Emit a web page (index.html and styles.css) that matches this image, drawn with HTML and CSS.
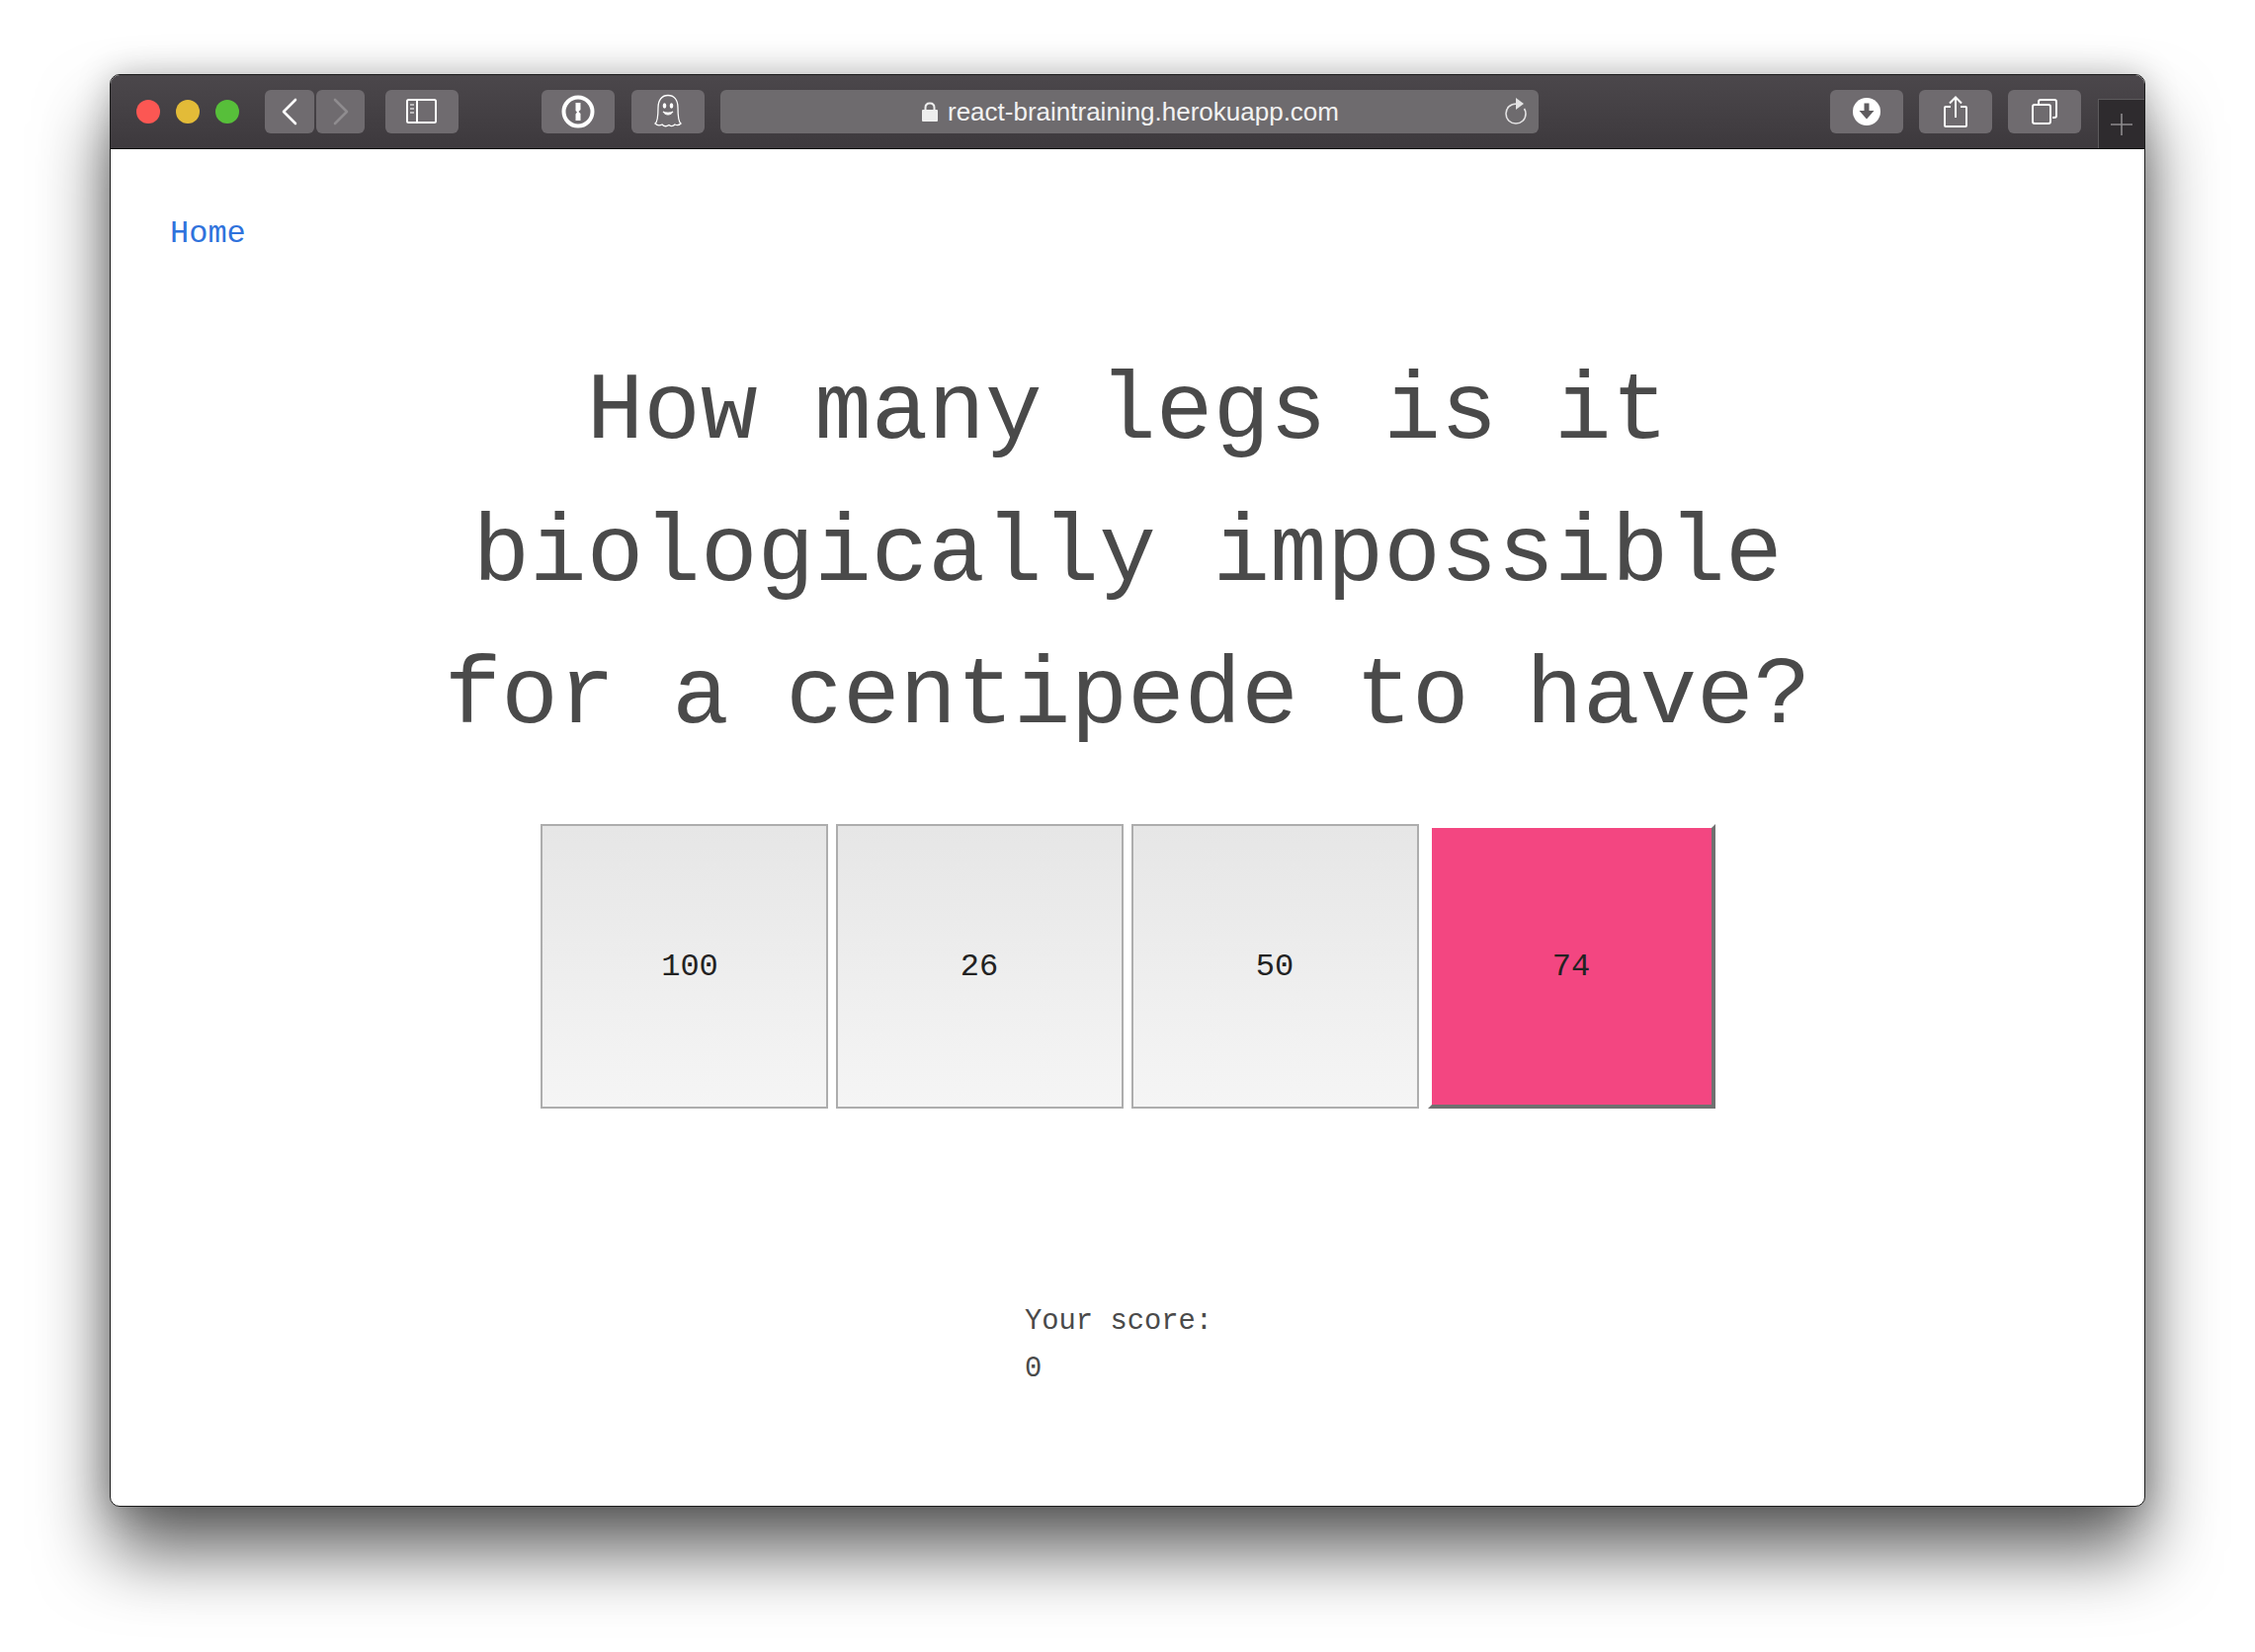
FILE: index.html
```html
<!DOCTYPE html>
<html lang="en">
<head>
    <meta charset="UTF-8">
    <title>Brain Training</title>
    <link rel="stylesheet" href="styles.css">
</head>
<body>

<div class="window">
    <div class="toolbar">
        <div class="lights">
            <span class="light red"></span>
            <span class="light yellow"></span>
            <span class="light green"></span>
        </div>

        <div class="tool back">
            <svg width="22" height="30" viewBox="0 0 22 30"><path d="M17 3 L5 15 L17 27" fill="none" stroke="#fff" stroke-width="2.6" stroke-linecap="round" stroke-linejoin="round"/></svg>
        </div>
        <div class="tool forward">
            <svg width="22" height="30" viewBox="0 0 22 30"><path d="M5 3 L17 15 L5 27" fill="none" stroke="#8f8c8f" stroke-width="2.6" stroke-linecap="round" stroke-linejoin="round"/></svg>
        </div>
        <div class="tool sidebar">
            <svg width="32" height="26" viewBox="0 0 32 26">
                <rect x="1" y="1" width="29" height="23" rx="1.5" fill="none" stroke="#fff" stroke-width="2"/>
                <path d="M11 1 V24" stroke="#fff" stroke-width="2"/>
                <path d="M4 6 H8 M4 10 H8 M4 14 H8" stroke="#bdbbbd" stroke-width="2"/>
            </svg>
        </div>

        <div class="tool onepassword">
            <svg width="34" height="34" viewBox="0 0 34 34">
                <circle cx="17" cy="17" r="14.5" fill="none" stroke="#fff" stroke-width="4"/>
                <path d="M14.5 8 H19.5 V15 L17.5 17 L19.5 19 V26 H14.5 V19.5 L16 17.5 L14.5 16 Z" fill="#fff"/>
            </svg>
        </div>
        <div class="tool ghost">
            <svg width="32" height="36" viewBox="0 0 32 36">
                <path d="M3 30 C6 28 6 20 6 14 C6 6 10 1.500 16 1.500 C22 1.500 26 6 26 14 C26 20 26 28 29 30 C27 32 25 32 23 31 C21 33 19 33 17 31.500 C15 33 12 33 10 31 C8 32 5 32 3 30 Z" fill="none" stroke="#fff" stroke-width="1.300"/>
                <ellipse cx="12.500" cy="12" rx="1.800" ry="2.800" fill="#fff"/>
                <ellipse cx="19.500" cy="12" rx="1.800" ry="2.800" fill="#fff"/>
                <path d="M11 18 C13 22 19 22 21 18 C18 19.500 14 19.500 11 18 Z" fill="#fff" stroke="#fff"/>
            </svg>
        </div>

        <div class="address">
            <svg class="lock" width="16" height="20" viewBox="0 0 16 20">
                <path d="M3.500 9 V6 C3.500 3 5.500 1.500 8 1.500 C10.500 1.500 12.500 3 12.500 6 V9" fill="none" stroke="#eee" stroke-width="2"/>
                <rect x="0" y="8" width="16" height="12" rx="1" fill="#eee"/>
            </svg>
            <span class="url">react-braintraining.herokuapp.com</span>
            <svg class="reload" width="24" height="28" viewBox="0 0 24 28">
                <path d="M13 6 C6 6 2 10.500 2 16 C2 22 6.500 26 12 26 C17.500 26 22 22 22 16 C22 14 21.500 12.500 20.500 11" fill="none" stroke="#e4e3e4" stroke-width="1.600"/>
                <path d="M12 0 L20 6 L12 12 Z" fill="#e4e3e4"/>
            </svg>
        </div>

        <div class="tool download">
            <svg width="28" height="28" viewBox="0 0 28 28">
                <circle cx="14" cy="14" r="14" fill="#fff"/>
                <path d="M11.500 5.500 H16.500 V13 H21.500 L14 21.500 L6.500 13 H11.500 Z" fill="#5f5c5f"/>
            </svg>
        </div>
        <div class="tool share">
            <svg width="24" height="32" viewBox="0 0 24 32">
                <path d="M7 11 H2 C1.400 11 1 11.400 1 12 V30 C1 30.600 1.400 31 2 31 H22 C22.600 31 23 30.600 23 30 V12 C23 11.400 22.600 11 22 11 H17" fill="none" stroke="#fff" stroke-width="2"/>
                <path d="M12 22 V2 M6 7.500 L12 1.500 L18 7.500" fill="none" stroke="#fff" stroke-width="2"/>
            </svg>
        </div>
        <div class="tool tabs">
            <svg width="26" height="26" viewBox="0 0 26 26">
                <rect x="1" y="6" width="18" height="19" rx="2" fill="none" stroke="#fff" stroke-width="2"/>
                <path d="M7 5 V3 C7 1.800 7.800 1 9 1 H23 C24.200 1 25 1.800 25 3 V17 C25 18.200 24.200 19 23 19 H21" fill="none" stroke="#fff" stroke-width="2"/>
            </svg>
        </div>

        <div class="new-tab">
            <svg width="22" height="22" viewBox="0 0 22 22"><path d="M11 0 V22 M0 11 H22" stroke="#8d8b8d" stroke-width="1.600"/></svg>
        </div>
    </div>

    <div class="page">
        <nav class="nav">
            <a class="home-link" href="#">Home</a>
        </nav>

        <h1 class="question">How many legs is it biologically impossible for a centipede to have?</h1>

        <div class="answers">
            <button class="answer answer-wide">100</button>
            <button class="answer">26</button>
            <button class="answer">50</button>
            <button class="answer answer-picked">74</button>
        </div>

        <div class="score">
            <div>Your score:</div>
            <div>0</div>
        </div>
    </div>
</div>

</body>
</html>
```

FILE: styles.css
```css
body {
    margin: 0;
    padding: 0;
    background-color: #ffffff;
    font-family: "Liberation Mono", monospace;
    height: 1672px;
    overflow: hidden;
}

.window {
    width: 2060px;
    height: 1450px;
    margin: 75px 0 0 111px;
    background-color: #ffffff;
    border-radius: 10px;
    overflow: hidden;
    display: flex;
    flex-direction: column;
    box-sizing: border-box;
    border: 1px solid #1c1c1c;
    box-shadow: 0 46px 72px rgba(0, 0, 0, 0.62), 0 0 34px rgba(0, 0, 0, 0.22);
}

.toolbar {
    height: 75px;
    flex-shrink: 0;
    box-sizing: border-box;
    padding-left: 26px;
    display: flex;
    align-items: center;
    background: linear-gradient(#4b474b, #3d393d);
    border-bottom: 1px solid #0c0c0c;
}

.lights {
    display: flex;
    gap: 16px;
    margin-right: 26px;
}

.light {
    width: 24px;
    height: 24px;
    border-radius: 50%;
}

.red {
    background-color: #fc5753;
}

.yellow {
    background-color: #e3bb38;
}

.green {
    background-color: #57bf3a;
}

.tool {
    width: 74px;
    height: 44px;
    flex-shrink: 0;
    border-radius: 6px;
    background-color: #6f6b6f;
    display: flex;
    align-items: center;
    justify-content: center;
}

.back {
    width: 50px;
    margin-right: 2px;
}

.forward {
    width: 49px;
    margin-right: 21px;
}

.sidebar {
    margin-right: 84px;
}

.onepassword {
    margin-right: 17px;
}

.ghost {
    margin-right: 16px;
}

.address {
    width: 828px;
    height: 44px;
    flex-shrink: 0;
    border-radius: 6px;
    background-color: #6e6b6e;
    margin-right: 295px;
    display: flex;
    align-items: center;
    color: #f2f2f2;
    font-family: "Liberation Sans", sans-serif;
    font-size: 26px;
}

.lock {
    margin-left: 204px;
    margin-right: 10px;
}

.url {
    width: 395px;
    white-space: nowrap;
}

.reload {
    margin-left: 168px;
}

.download,
.share {
    margin-right: 16px;
}

.tabs {
    margin-right: 17px;
}

.new-tab {
    width: 49px;
    height: 50px;
    align-self: flex-end;
    box-sizing: border-box;
    background-color: #2e2b2e;
    border-top: 1px solid #5d5b5d;
    border-left: 1px solid #5d5b5d;
    display: flex;
    align-items: center;
    justify-content: center;
}

.page {
    flex: 1;
    padding: 64px 60px 0;
}

.nav {
    height: 44px;
    line-height: 44px;
}

.home-link {
    color: #2f72dc;
    font-size: 32px;
    text-decoration: none;
}

.question {
    max-width: 1450px;
    margin: 87px auto 0;
    color: #4a4a4a;
    font-size: 96px;
    font-weight: normal;
    line-height: 144px;
    text-align: center;
}

.answers {
    display: flex;
    justify-content: center;
    gap: 8px;
    margin-top: 56px;
}

.answer {
    width: 291px;
    height: 288px;
    padding: 0;
    box-sizing: border-box;
    border: 2px solid #adadad;
    background: linear-gradient(#e6e6e6, #f5f5f5);
    color: #222222;
    font-family: "Liberation Mono", monospace;
    font-size: 32px;
}

.answer-wide {
    padding-left: 12px;
}

.answer-picked {
    margin-left: 1px;
    background: #f34681;
    border-width: 4px;
    border-style: solid;
    border-color: #ffffff #707070 #707070 #ffffff;
}

.score {
    width: 208px;
    margin: 192px auto 0;
    color: #4a4a4a;
    font-size: 28.8px;
    line-height: 48px;
}
```
